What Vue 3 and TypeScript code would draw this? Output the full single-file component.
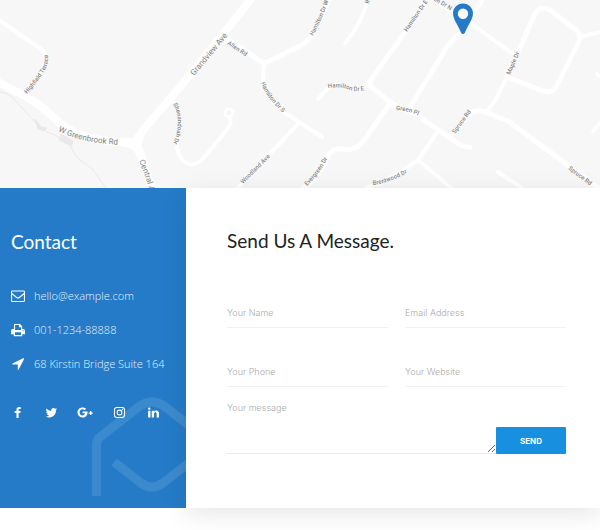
<script setup lang="ts">
import { ref } from 'vue'

interface Road {
  d: string
  w: number
}
interface MapLabel {
  text: string
  d: string
  size: number
}
interface IconLink {
  name: string
  box: string
  d: string
}
interface Field {
  id: string
  label: string
  type: string
}

const roads: Road[] = [
  { d: 'M-4 18 L42 50 Q48 55 45 64 Q40 76 24 94', w: 4 },
  { d: 'M-4 81 L25 96 Q41 105 51 115 Q65 130 86 137 Q110 143 134 142', w: 8 },
  { d: 'M134 143 Q140 135 145 128 L190 75 L252 -2', w: 8 },
  { d: 'M134 143 Q141 150 143 162 L153 192', w: 8 },
  { d: 'M173 100 Q184 118 177 134 Q175 148 181 158 Q190 170 202 160 L229 127 Q232 122 229 117', w: 4 },
  { d: 'M226 38 L252 55 Q260 62 265 63 L300 46 Q308 42 313 33 L330 -2', w: 5 },
  { d: 'M264 63 L263 84 Q268 100 285 113 L322 137', w: 4 },
  { d: 'M298 124 L236 190', w: 4 },
  { d: 'M300 191 Q320 176 326 160 Q330 148 342 149 Q355 151 362 143 L391 102', w: 5 },
  { d: 'M368 0 Q361 25 345 43', w: 4 },
  { d: 'M318 99 L328 88 Q335 82 345 87 Q358 92 368 84', w: 4 },
  { d: 'M368 84 L405 32 L428 -2', w: 5 },
  { d: 'M368 84 L391 103 L402 109 Q414 111 421 118 L437 129 L460 145 Q464 147 470 147', w: 5 },
  { d: 'M430 -3 L470 23 L512 53', w: 4 },
  { d: 'M483 -2 L463 31 Q448 43 442 55 L409 109', w: 5 },
  { d: 'M507 77 L535 14 Q539 5 550 10 L576 30 Q582 35 579 41 L557 85 Q552 95 540 90 L507 77', w: 5 },
  { d: 'M580 37 L604 31', w: 4 },
  { d: 'M507 77 L495 101 L486 112', w: 4 },
  { d: 'M450 137 L469 114 Q476 108 488 113 L508 121 L565 163 L604 192', w: 5 },
  { d: 'M438 131 L418 160 L405 169 Q388 181 366 188', w: 4 },
  { d: 'M418 160 L456 192', w: 4 },
  { d: 'M498 172 L528 192', w: 4 },
  { d: 'M604 118 L593 131', w: 4 },
  { d: 'M604 79 L597 74', w: 4 },
]

const labels: MapLabel[] = [
  { text: 'Highfield Terrace', d: 'M27 94 Q41 78 46 68 Q50 59 46 42', size: 6 },
  { text: 'W Greenbrook Rd', d: 'M58 131 Q86 145 130 145', size: 8 },
  { text: 'Grandview Ave', d: 'M194 76 L236 26', size: 8 },
  { text: 'Central Ave', d: 'M139 161 Q147 178 153 205', size: 8 },
  { text: 'Shenandoah Dr', d: 'M173 104 Q184 123 170 150', size: 6 },
  { text: 'Allen Rd', d: 'M227 44 L257 64', size: 6 },
  { text: 'Hamilton Dr W', d: 'M313 36 Q324 16 332 -10', size: 6 },
  { text: 'Hamilton Dr S', d: 'M261 83 Q266 99 292 121', size: 6 },
  { text: 'Hamilton Dr E', d: 'M328 88 Q340 86 350 90 Q360 93 374 87', size: 6 },
  { text: 'Hamilton Dr E', d: 'M407 32 L436 -10', size: 6 },
  { text: 'Hamilton Dr N', d: 'M418 -9 L463 18', size: 6 },
  { text: 'Ridge Rd', d: 'M369 4 L376 -20', size: 6 },
  { text: 'Green Pl', d: 'M396 110 Q409 110 426 119', size: 6 },
  { text: 'Maple Dr', d: 'M510 75 L524 43', size: 6 },
  { text: 'Spruce Rd', d: 'M455 134 L479 101', size: 6 },
  { text: 'Spruce Rd', d: 'M568 169 L600 193', size: 6 },
  { text: 'Brentwood Dr', d: 'M373 185 Q395 182 418 166', size: 6 },
  { text: 'Evergreen Dr', d: 'M307 186 Q322 171 331 152', size: 6 },
  { text: 'Woodland Ave', d: 'M243 184 L280 147', size: 6 },
]

const contacts: (IconLink & { href: string })[] = [
  {
    name: 'hello@example.com',
    href: 'mailto:hello@example.com',
    box: '0 0 14 14',
    d: 'M1.3 1.5H12.7Q14 1.5 14 2.8V11.7Q14 13 12.7 13H1.3Q0 13 0 11.7V2.8Q0 1.5 1.3 1.5ZM1.1 5.6V11.9H12.9V5.6L8.7 8.9Q7 10.2 5.3 8.9ZM1.1 2.6V4.1L6 8Q7 8.8 8 8L12.9 4.1V2.6Z',
  },
  {
    name: '001-1234-88888',
    href: 'tel:001123488888',
    box: '0 0 14 14',
    d: 'M3 1H9L11.2 3.2V6H12.3Q14 6.2 14 8V11.3H11.2V13.2H2.8V11.3H0V8Q0 6.2 1.7 6H3ZM4.1 2.1V7H10V4.2H8V2.1ZM4 9.2V12H10V9.2ZM12.1 7.2A.6 .6 0 1 0 12.1 8.4A.6 .6 0 1 0 12.1 7.2Z',
  },
  {
    name: '68 Kirstin Bridge Suite 164',
    href: '#map',
    box: '0 0 14 14',
    d: 'M12.7 1.2Q13.3 1.4 13.1 2L7.7 12.6Q7.3 13.2 6.8 12.7V7.5H1.6Q.9 7 1.5 6.6L12.1 1.3Z',
  },
]

const socials: IconLink[] = [
  {
    name: 'Facebook',
    box: '-3 0 14 14',
    d: 'M7.5 1.1V3.1H6.3Q5.2 3.1 5.2 4.1V5.4H7.4L7.1 7.6H5.2V13H2.9V7.6H1V5.4H2.9V3.8Q2.9 1 5.8 1Z',
  },
  {
    name: 'Twitter',
    box: '0 0 14 14',
    d: 'M13 3.2Q12.5 3.9 11.8 4.4C12 9 8.8 12.3 4.8 12.3Q2.5 12.3.8 11.2Q3 11.3 4.4 10.2Q2.6 10 2.1 8.5H3.2Q1.3 7.9 1.2 6L2.3 6.3Q.4 4.7 1.6 2.8Q3.7 5.3 6.7 5.4C6.2 2.3 9.3 1.2 11 2.9L12.6 2.3Q12.3 3.1 11.5 3.6Z',
  },
  {
    name: 'Google Plus',
    box: '0 0 18 14',
    d: 'M6 5.9H11.3C11.9 9.6 9.7 12.5 6 12.5A5.5 5.5 0 1 1 9.8 3L8.2 4.5C6 2.5 2.8 4 2.8 7C2.8 10.4 7.8 11.6 8.6 7.9H6ZM14 5.4H15.5V6.9H17V8.3H15.5V9.8H14V8.3H12.5V6.9H14Z',
  },
  {
    name: 'Instagram',
    box: '0 0 14 14',
    d: 'M4.2 1H9.8Q13 1 13 4.2V9.8Q13 13 9.8 13H4.2Q1 13 1 9.8V4.2Q1 1 4.2 1ZM4.3 2.1Q2.1 2.1 2.1 4.3V9.7Q2.1 11.9 4.3 11.9H9.7Q11.9 11.9 11.9 9.7V4.3Q11.9 2.1 9.7 2.1ZM7 3.9A3.1 3.1 0 1 1 7 10.1A3.1 3.1 0 1 1 7 3.9ZM7 5A2 2 0 1 0 7 9A2 2 0 1 0 7 5ZM10.2 3A.8 .8 0 1 1 10.2 4.6A.8 .8 0 1 1 10.2 3Z',
  },
  {
    name: 'LinkedIn',
    box: '0 0 14 14',
    d: 'M1.2 5H3.7V12.3H1.2ZM2.4 1.5A1.3 1.3 0 1 1 2.4 4.1A1.3 1.3 0 1 1 2.4 1.5ZM5.1 5H7.5V6C8.7 4.2 12.9 4.2 12.9 8V12.3H10.4V8.4C10.4 6.2 7.6 6.2 7.6 8.4V12.3H5.1Z',
  },
]

const fields: Field[] = [
  { id: 'name', label: 'Your Name', type: 'text' },
  { id: 'email', label: 'Email Address', type: 'email' },
  { id: 'phone', label: 'Your Phone', type: 'tel' },
  { id: 'website', label: 'Your Website', type: 'url' },
]

const values = ref<Record<string, string>>({ name: '', email: '', phone: '', website: '' })
const message = ref('')
</script>

<template>
  <main class="page">
    <svg id="map" class="map" viewBox="0 0 600 188" preserveAspectRatio="xMidYMid slice" role="img" aria-label="Map">
      <g class="creek">
        <path d="M0 92 Q9 93 14 99 L37 124 Q44 132 55 135 L70 145 Q75 158 86 164 Q92 167 96 174 L106 188" />
        <path class="pond" d="M35 119 L41 127 L47 128 L44 131 L38 129ZM61 134 L73 141 L71 146 L59 140Z" />
      </g>
      <path v-for="(road, i) in roads" :key="i" class="road" :d="road.d" :stroke-width="road.w" />
      <circle class="road" cx="229" cy="113" r="4" stroke-width="3" />
      <path class="junction" d="M122 139 Q133 140 139 133 L144 138 Q139 146 143 155 L137 158 Q135 147 122 146Z" />
      <g class="labels">
        <template v-for="(label, i) in labels" :key="i">
          <path :id="`street-${i}`" :d="label.d" fill="none" />
          <text :class="{ major: label.size > 6 }" :font-size="label.size">
            <textPath :href="`#street-${i}`">{{ label.text }}</textPath>
          </text>
        </template>
      </g>
      <path
        class="pin"
        fill-rule="evenodd"
        d="M463 3.500C468.800 3.500 473 8 473 13.500C473 19 468.500 24 465 32.500Q464.300 34 463 34Q461.700 34 461 32.500C457.500 24 453 19 453 13.500C453 8 457.200 3.500 463 3.500ZM463 8.600A5.200 5.200 0 1 0 463 19A5.200 5.200 0 1 0 463 8.600Z"
      />
    </svg>

    <section class="panels">
      <aside class="contact">
        <svg class="mark" viewBox="0 0 94 100" aria-hidden="true">
          <path d="M4.500 99V47Q4.500 43 8 40L48 9Q60 1 72 9L112 40" />
          <path d="M22 65L49 86Q60 94 71 86L98 65" />
        </svg>
        <h2>Contact</h2>
        <ul class="details">
          <li v-for="item in contacts" :key="item.name">
            <a :href="item.href">
              <svg :viewBox="item.box" aria-hidden="true"><path fill-rule="evenodd" :d="item.d" /></svg>
              <span>{{ item.name }}</span>
            </a>
          </li>
        </ul>
        <ul class="socials">
          <li v-for="item in socials" :key="item.name">
            <a href="#" :aria-label="item.name">
              <svg :viewBox="item.box" aria-hidden="true"><path fill-rule="evenodd" :d="item.d" /></svg>
            </a>
          </li>
        </ul>
      </aside>

      <form class="message" @submit.prevent>
        <h2>Send Us A Message.</h2>
        <div class="fields">
          <div v-for="field in fields" :key="field.id" class="field">
            <label class="hidden" :for="field.id">{{ field.label }}</label>
            <input :id="field.id" v-model="values[field.id]" :type="field.type" :placeholder="field.label" />
          </div>
        </div>
        <div class="send-row">
          <label class="hidden" for="message">Your message</label>
          <textarea id="message" v-model="message" placeholder="Your message"></textarea>
          <button type="submit">SEND</button>
        </div>
      </form>
    </section>
  </main>
</template>

<style>
body {
  margin: 0;
  background: #fff;
}
</style>

<style scoped>
.page {
  padding-bottom: 22px;
  overflow: hidden;
  font-family: 'Open Sans', sans-serif;
}
.map {
  display: block;
  width: 100%;
  height: 188px;
  background: #f7f7f7;
}
.road {
  fill: none;
  stroke: #fff;
  stroke-linecap: round;
  stroke-linejoin: round;
}
.junction {
  fill: #fff;
}
.creek path {
  fill: none;
  stroke: #e9e9e9;
  stroke-width: 1;
}
.creek .pond {
  fill: #e9e9e9;
}
.labels text {
  font-family: Roboto, sans-serif;
  font-weight: 500;
  fill: #858585;
  stroke: #fafafa;
  stroke-width: 1px;
  paint-order: stroke;
}
.labels .major {
  font-weight: 400;
}
.pin {
  fill: #257bc7;
}
.panels {
  display: grid;
  grid-template-columns: 31% 1fr;
}
h2 {
  margin: 0;
  font-family: Lato, sans-serif;
  font-weight: 400;
  line-height: 24px;
}
ul {
  margin: 0;
  padding: 0;
  list-style: none;
}
.contact {
  position: relative;
  box-sizing: border-box;
  padding: 42px 11px 80px;
  background: #257bc7;
  color: #fff;
}
.contact h2 {
  font-size: 19px;
}
.mark {
  position: absolute;
  right: 0;
  bottom: 11px;
  width: 94px;
  height: 100px;
  overflow: hidden;
}
.mark path {
  fill: none;
  stroke: #3c8ace;
  stroke-width: 9;
}
.details {
  position: relative;
  display: grid;
  gap: 18px;
  margin-top: 34px;
}
.details a {
  display: flex;
  align-items: center;
  gap: 9px;
  height: 16px;
  color: #e4effa;
  font-size: 11px;
  font-weight: 300;
  line-height: 14px;
  white-space: nowrap;
  text-decoration: none;
}
.details svg {
  flex: none;
  width: 14px;
  height: 14px;
  fill: #fff;
}
.socials {
  position: relative;
  display: flex;
  gap: 20px;
  margin: 34px 0 0 -1px;
}
.socials a {
  display: flex;
  justify-content: center;
  width: 14px;
}
.socials svg {
  flex: none;
  height: 13px;
  fill: #fff;
}
.message {
  position: relative;
  box-sizing: border-box;
  padding: 41px 34px 54px 41px;
  background: #fff;
  box-shadow: 0 6px 24px rgba(0, 0, 0, 0.1);
}
.message h2 {
  color: #222;
  font-size: 19px;
}
.fields {
  display: grid;
  grid-template-columns: 1fr 1fr;
  gap: 30px 17px;
  margin-top: 46px;
}
.field {
  display: flex;
}
input,
textarea {
  box-sizing: border-box;
  width: 100%;
  margin: 0;
  border: 0;
  border-bottom: 1px solid #f2f2f2;
  outline: 0;
  background: transparent;
  color: #444;
  font: 300 9px/12px Inter, sans-serif;
}
input {
  height: 29px;
  padding: 0 0 2px;
}
::placeholder {
  color: #aaa;
  opacity: 1;
}
.send-row {
  display: flex;
  align-items: flex-end;
  margin-top: 13px;
}
textarea {
  flex: 1;
  min-width: 0;
  height: 54px;
  padding: 2px 0;
  border-bottom-color: #ebebeb;
  resize: both;
}
button {
  flex: none;
  width: 70px;
  height: 27px;
  padding: 0;
  border: 0;
  border-radius: 1px;
  background: #198fdf;
  color: #fff;
  font: 700 8px/12px Inter, sans-serif;
}
.hidden {
  position: absolute;
  width: 1px;
  height: 1px;
  overflow: hidden;
  clip-path: inset(50%);
}
</style>
